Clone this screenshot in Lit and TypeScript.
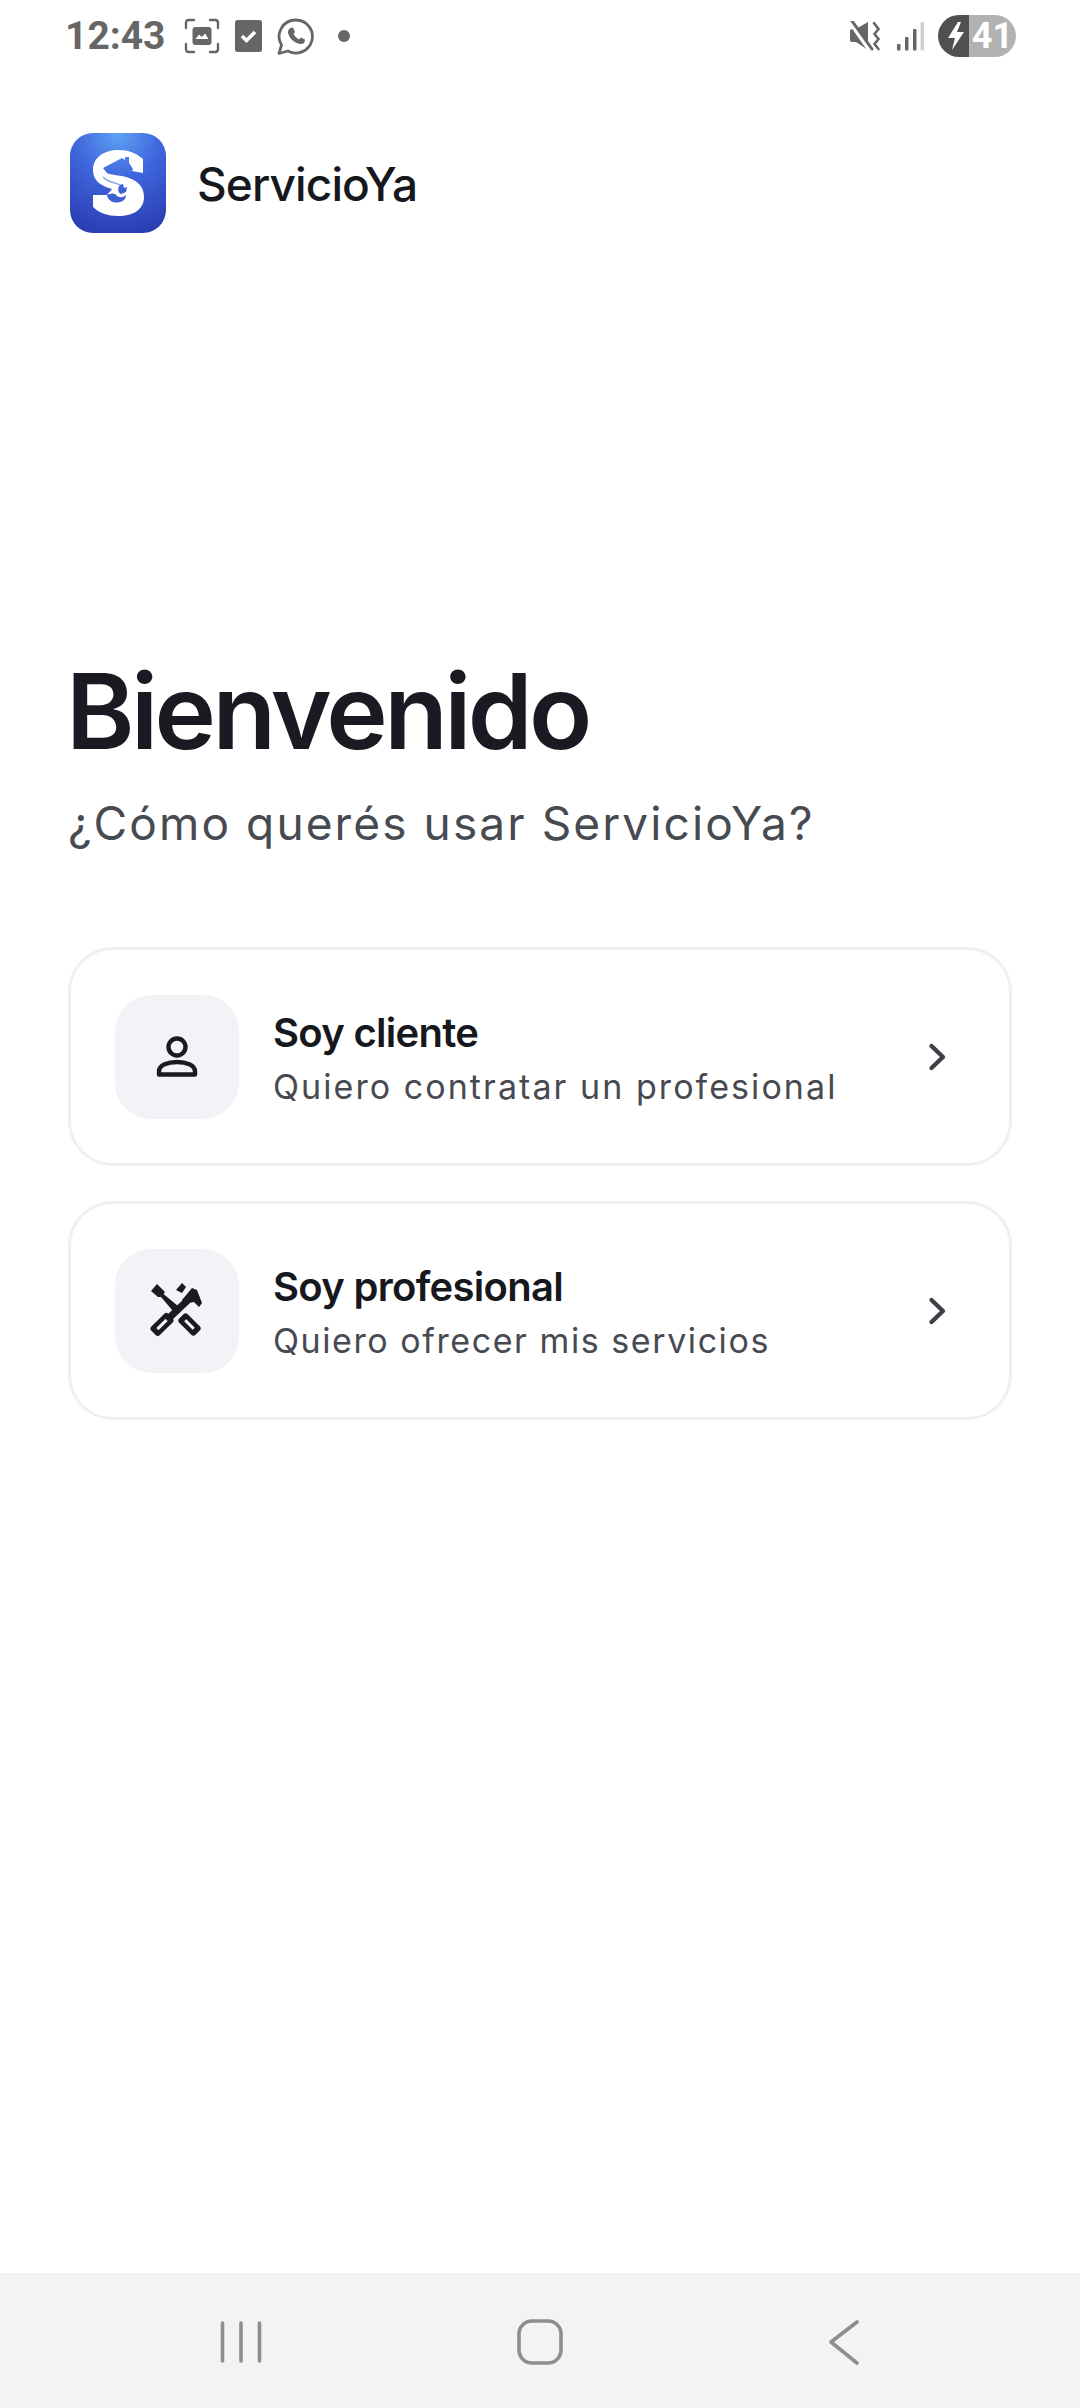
import { LitElement, html, css } from "lit";
import { customElement } from "lit/decorators.js";

const chevron = html`<svg class="chev" width="22" height="30" viewBox="0 0 22 30"><path d="M4.5 4 L16 15 L4.5 26" fill="none" stroke="#3f4149" stroke-width="4.4" stroke-linecap="round" stroke-linejoin="round"/></svg>`;

const person = html`<svg width="42" height="42" viewBox="0 0 42 42"><circle cx="21" cy="11" r="8.500" fill="none" stroke="#1a1b20" stroke-width="4.400"/><path d="M3 38.500 V35.500 C3 29 12 26 21 26 S39 29 39 35.500 V38.500 Z" fill="none" stroke="#1a1b20" stroke-width="4.400" stroke-linejoin="round"/></svg>`;

const tools = html`<svg width="76" height="76" viewBox="0 3 76 76"><g fill="#1a1b20">
<path d="M12 21 L18 14 L26 22 L24.500 24 L39 36 L34 41 L22 27 L19 27 Z"/>
<path d="M28 45 L46 28 L51 33 L33 50 Z"/>
<path d="M43 30 L53 18 L58 20 L63 33 L60 37 L55 32 L50 33 L47 35 Z"/>
<path d="M37 20 L43 13 L47 17 L43 23 Z"/>
<rect x="39" y="48.500" width="23" height="12" rx="3" transform="rotate(45 50.500 54.500)"/>
<rect x="11" y="48.500" width="24" height="12" rx="3" transform="rotate(-45 23 54.500)"/>
</g><g fill="#f2f3f7">
<rect x="44.500" y="53" width="12" height="3" transform="rotate(45 50.500 54.500)"/>
<rect x="16.500" y="53" width="13" height="3" transform="rotate(-45 23 54.500)"/>
</g></svg>`;

@customElement("status-bar")
class StatusBar extends LitElement {
  static styles = css`
    :host { display: flex; align-items: center; height: 72px; padding: 0 64px 0 65px; box-sizing: border-box; color: #666; }
    .time { font: 700 39px/1 Roboto, sans-serif; color: #666; width: 119px; flex: none; }
    .left { display: flex; align-items: center; gap: 15px; }
    .spacer { flex: 1; }
    .right { display: flex; align-items: center; }
    .sig { margin-left: 17px; margin-right: 14px; }
    .batt { display: flex; width: 78px; height: 42px; border-radius: 21px; overflow: hidden; }
    .bolt { width: 31px; background: #505050; display: flex; align-items: center; justify-content: flex-end; padding-right: 3px; box-sizing: border-box; }
    .lvl { flex: 1; background: #b2b2b2; color: #fff; font: 700 36px/42px Roboto, sans-serif; text-align: center; }
    .dot { width: 12px; height: 12px; border-radius: 50%; background: #666; margin-left: 9px; }
  `;
  render() {
    return html`
      <span class="time">12:43</span>
      <div class="left">
        <svg width="36" height="36" viewBox="0 0 36 36"><path d="M2 10 V5 Q2 2 5 2 H10 M26 2 H31 Q34 2 34 5 V10 M34 26 V31 Q34 34 31 34 H26 M10 34 H5 Q2 34 2 31 V26" fill="none" stroke="#666" stroke-width="2.400" stroke-linecap="round"/><rect x="8.500" y="9" width="19" height="18" rx="3" fill="#666"/><path d="M11.500 21 L15 16.500 L18 19 L21 15.500 L24.500 21 Z" fill="#fff"/></svg>
        <svg width="27" height="32" viewBox="0 0 27 32"><rect width="27" height="32" rx="2.500" fill="#666"/><path d="M7 16 L11.500 20.500 L20 12" fill="none" stroke="#fff" stroke-width="3.600"/></svg>
        <svg width="37" height="37" viewBox="0 0 37 37"><path d="M19 2 A16.500 16.500 0 1 1 11 33 L2 35.500 L4.500 27 A16.500 16.500 0 0 1 19 2 Z" fill="none" stroke="#666" stroke-width="2.800" stroke-linejoin="round"/><path d="M13.500 10 L16 9.600 L18 14 L16.500 16 Q18.500 20 22 21.600 L24 19.600 L28 21.800 L27.400 24.400 Q25 27 21 25.600 Q13 22.600 11 15 Q10.600 12 13.500 10 Z" fill="#666"/></svg>
        <span class="dot"></span>
      </div>
      <span class="spacer"></span>
      <div class="right">
        <svg width="30" height="30" viewBox="0 0 30 30"><path d="M0 10 Q0 8 2 8 H6 L18 1 V29 L6 21 H2 Q0 21 0 19 Z" fill="#666"/><path d="M-1 -1 L20 29" stroke="#fff" stroke-width="5"/><path d="M2 0 L22 28" stroke="#666" stroke-width="3" stroke-linecap="round"/><path d="M24 2 L28.500 8 L24.500 13 L28.500 18 L24.500 23 L28.500 28" fill="none" stroke="#666" stroke-width="2.600" stroke-linecap="round"/></svg>
        <svg class="sig" width="27" height="29" viewBox="0 0 27 29"><g fill="#666"><rect x="0" y="22" width="3.500" height="6.500" rx="1"/><rect x="8" y="15" width="3.500" height="13.500" rx="1"/><rect x="16" y="7" width="3.500" height="21.500" rx="1"/></g><rect x="23.500" y="0" width="3.500" height="28.500" rx="1" fill="#cfcfcf"/></svg>
        <div class="batt">
          <div class="bolt"><svg width="20" height="30" viewBox="0 0 20 30"><path d="M12 1 L2 17 H9 L6 29 L18 11 H11 L15 1 Z" fill="#fff"/></svg></div>
          <div class="lvl">41</div>
        </div>
      </div>
    `;
  }
}

@customElement("choice-card")
class ChoiceCard extends LitElement {
  static properties = { title: {}, sub: {} };
  declare title: string;
  declare sub: string;
  static styles = css`
    :host { display: flex; align-items: center; height: 219px; box-sizing: border-box; border: 3px solid #eff0f3; border-radius: 45px; padding: 0 60px 0 44px; background: #fff; }
    .box { width: 124px; height: 124px; border-radius: 36px; background: #f2f3f7; display: flex; align-items: center; justify-content: center; flex: none; }
    .text { flex: 1; margin: 5px 0 0 34px; min-width: 0; }
    .t { font: 600 40px/50px Inter, sans-serif; letter-spacing: -0.7px; color: #17181d; }
    .s { font: 400 34px/46px Inter, sans-serif; letter-spacing: 1.57px; color: #484a52; margin-top: 6px; }
    :host([wide]) .s { letter-spacing: 2.06px; }
  `;
  render() {
    return html`<div class="box"><slot></slot></div>
      <div class="text"><div class="t">${this.title}</div><div class="s">${this.sub}</div></div>
      ${chevron}`;
  }
}

@customElement("app-root")
class AppRoot extends LitElement {
  static styles = css`
    :host { display: flex; flex-direction: column; width: 1080px; height: 2408px; background: #fff; overflow: hidden; font-family: Inter, sans-serif; }
    header { display: flex; align-items: center; gap: 31px; padding: 61px 70px 0; }
    .logo { width: 96px; height: 100px; flex: none; display: block; }
    .brand { font: 500 46px/1 Inter, sans-serif; letter-spacing: -0.9px; color: #17181d; margin-top: 2px; }
    main { flex: 1; padding: 0 68px; }
    h1 { margin: 418px 0 0 -2px; font: 600 104px/120px Inter, sans-serif; letter-spacing: -3.6px; color: #1a1b22; }
    .sub { margin: 22px 0 0; font: 400 46px/60px Inter, sans-serif; letter-spacing: 2.1px; color: #484a52; }
    .cards { display: flex; flex-direction: column; gap: 35px; margin-top: 94px; }
    nav { height: 135px; background: #f3f3f3; display: flex; align-items: center; justify-content: space-between; padding: 3px 220px 0 220px; box-sizing: border-box; }
    nav svg { display: block; }
    .home { margin-right: 10px; }
  `;
  render() {
    return html`
      <status-bar></status-bar>
      <header>
        <svg class="logo" viewBox="0 0 96 100">
          <defs><radialGradient id="g" cx="50%" cy="0%" r="100%"><stop offset="0" stop-color="#5fa3f4"/><stop offset=".45" stop-color="#3f66dc"/><stop offset="1" stop-color="#2c3fb4"/></radialGradient></defs>
          <rect width="96" height="100" rx="23" fill="url(#g)"/>
          <path d="M73 40 L73 26 C66 20 58 17 49 17 C33 17 23 25 23 37 C23 48 31 53 42 56 L37 62 L23 62 L23 74 C29 80 38 83 48 83 C64 83 74 76 74 64 C74 52 66 47 56 44 C48 42 41 42 37 40 L33 35 L52 25 L55 27 L55 24 L59 24 L59 30 L63 36 L62 38 Z" fill="#fff"/>
          <path d="M37 62 C38 68 44 71 50 69 C54 68 56 65 56 62 C53 65 49 65 46 62 C44 60 42 60 37 62 Z" fill="#3f5fd4"/>
          <path d="M33 44 C38 50 46 49 52 53" fill="none" stroke="#8fa8ea" stroke-width="1.500"/>
          <path d="M50 52 C47 55 48 60 51 61 L56 59 L57 54 L54 55 L53 51 Z" fill="#3f5fd4"/>
        </svg>
        <span class="brand">ServicioYa</span>
      </header>
      <main>
        <h1>Bienvenido</h1>
        <p class="sub">¿Cómo querés usar ServicioYa?</p>
        <div class="cards">
          <choice-card wide title="Soy cliente" sub="Quiero contratar un profesional">${person}</choice-card>
          <choice-card title="Soy profesional" sub="Quiero ofrecer mis servicios">${tools}</choice-card>
        </div>
      </main>
      <nav>
        <svg width="42" height="44" viewBox="0 0 42 44"><path d="M2.500 3 V41 M21 3 V41 M39.500 3 V41" stroke="#8e8e8e" stroke-width="3.600" stroke-linecap="round"/></svg>
        <svg class="home" width="46" height="46" viewBox="0 0 46 46"><rect x="2" y="2" width="42" height="42" rx="13" fill="none" stroke="#8e8e8e" stroke-width="3.600"/></svg>
        <svg width="32" height="46" viewBox="0 0 32 46"><path d="M29 3 L3 23 L29 44" fill="none" stroke="#8e8e8e" stroke-width="3.600" stroke-linecap="round" stroke-linejoin="round"/></svg>
      </nav>
    `;
  }
}
